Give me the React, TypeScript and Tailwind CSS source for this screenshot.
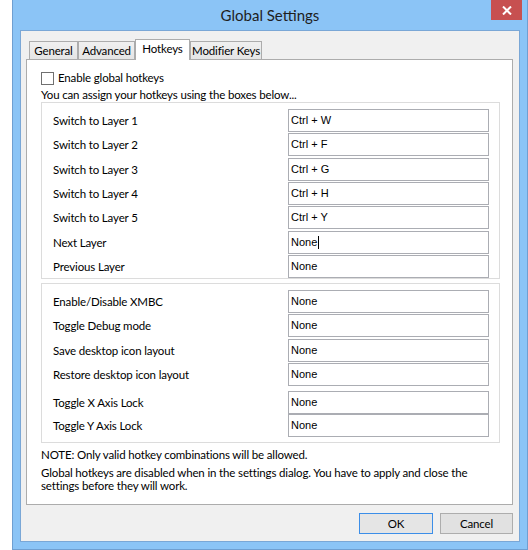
import React from 'react';

interface HotkeyRow {
    label: string;
    value: string;
    rowClass: string;
    caret?: boolean;
}

const layerRows: HotkeyRow[] = [
    { label: 'Switch to Layer 1', value: 'Ctrl + W', rowClass: 'h-[24px]' },
    { label: 'Switch to Layer 2', value: 'Ctrl + F', rowClass: 'h-[25px]' },
    { label: 'Switch to Layer 3', value: 'Ctrl + G', rowClass: 'h-[24px]' },
    { label: 'Switch to Layer 4', value: 'Ctrl + H', rowClass: 'h-[24px]' },
    { label: 'Switch to Layer 5', value: 'Ctrl + Y', rowClass: 'h-[25px]' },
    { label: 'Next Layer', value: 'None', rowClass: 'h-[24px]', caret: true },
    { label: 'Previous Layer', value: 'None', rowClass: 'h-[23px]' },
];

const toolRows: HotkeyRow[] = [
    { label: 'Enable/Disable XMBC', value: 'None', rowClass: 'h-[24px]' },
    { label: 'Toggle Debug mode', value: 'None', rowClass: 'h-[25px]' },
    { label: 'Save desktop icon layout', value: 'None', rowClass: 'h-[24px]' },
    { label: 'Restore desktop icon layout', value: 'None', rowClass: 'h-[28px]' },
    { label: 'Toggle X Axis Lock', value: 'None', rowClass: 'h-[23px]' },
    { label: 'Toggle Y Axis Lock', value: 'None', rowClass: 'h-[23px]' },
];

const tabs = [
    { name: 'General', width: 'ml-[3px] w-[49px]' },
    { name: 'Advanced', width: 'w-[57px]' },
    { name: 'Hotkeys', width: 'w-[55px]', active: true },
    { name: 'Modifier Keys', width: 'w-[72px]' },
];

const HotkeyGroup: React.FC<{ rows: HotkeyRow[]; bottomPad: string }> = ({ rows, bottomPad }) => (
    <div className={`w-[459px] border border-[#dcdcdc] pt-[6px] ${bottomPad}`}>
        {rows.map((row) => (
            <div key={row.label} className={`flex items-start ${row.rowClass}`}>
                <div className="h-[23px] w-[246px] pl-[11px] flex items-center whitespace-nowrap">{row.label}</div>
                <div className="h-[23px] w-[201px] shrink-0 border border-[#abadb3] bg-white pl-[2px] pt-[3px] font-['Liberation_Sans',sans-serif] text-[11px] tracking-normal leading-[14px] flex items-start">
                    <span>{row.value}</span>
                    {row.caret && <span className="ml-px mt-px h-[13px] w-px bg-black" />}
                </div>
            </div>
        ))}
    </div>
);

const App: React.FC = () => {
    return (
        <div className="w-[528px] h-[550px] bg-white flex font-['Lato',sans-serif] text-[11.5px] tracking-[-0.15px] text-black">
            <div className="ml-[12px] w-[516px] h-[550px] bg-[#8bc4f6] border-x border-b border-[#6f9fd1] px-[7px] pb-[7px] flex flex-col">
                {/* title bar */}
                <div className="h-[30px] grid grid-cols-[1fr_auto_1fr]">
                    <div />
                    <div className="text-[15px] tracking-normal leading-[30px] text-[#1e1e1e]">Global Settings</div>
                    <div className="flex justify-end">
                        <div className="w-[31px] h-[20px] mr-[-2px] bg-[#c75050] flex items-center justify-center">
                            <svg width="10" height="9" viewBox="0 0 10 9">
                                <path d="M1 0.5 L9 8.5 M9 0.5 L1 8.5" stroke="white" strokeWidth="2" />
                            </svg>
                        </div>
                    </div>
                </div>

                {/* client area */}
                <div className="h-[512px] bg-[#f0f0f0] border border-[#7aa7d6] flex flex-col">
                    <div className="mt-[8px] ml-[5px] h-[20px] flex items-end">
                        {tabs.map((tab) =>
                            tab.active ? (
                                <div
                                    key={tab.name}
                                    className={`${tab.width} h-[21px] -mb-px relative z-10 bg-white border border-b-0 border-[#acacac] text-center leading-[18px] whitespace-nowrap`}
                                >
                                    {tab.name}
                                </div>
                            ) : (
                                <div
                                    key={tab.name}
                                    className={`${tab.width} h-[18px] bg-gradient-to-b from-[#f0f0f0] to-[#e5e5e5] border border-b-0 border-[#acacac] text-center leading-[18px] whitespace-nowrap`}
                                >
                                    {tab.name}
                                </div>
                            )
                        )}
                    </div>

                    <div className="ml-[5px] w-[487px] h-[446px] bg-white border border-[#acacac] pl-[14px] pr-[12px] flex flex-col">
                        <div className="mt-[11px] h-[14px] flex items-center">
                            <div className="w-[13px] h-[13px] border border-[#707070] bg-white" />
                            <span className="ml-[4px]">Enable global hotkeys</span>
                        </div>
                        <div className="mt-[2px] h-[15px] leading-[15px] whitespace-nowrap">You can assign your hotkeys using the boxes below...</div>

                        <HotkeyGroup rows={layerRows} bottomPad="pb-0" />
                        <div className="mt-[4px]">
                            <HotkeyGroup rows={toolRows} bottomPad="pb-[5px]" />
                        </div>

                        <div className="mt-[4px] leading-[15px] whitespace-nowrap">NOTE: Only valid hotkey combinations will be allowed.</div>
                        <div className="mt-[4px] leading-[14px] whitespace-nowrap">
                            <div>Global hotkeys are disabled when in the settings dialog. You have to apply and close the</div>
                            <div className="-mt-px">settings before they will work.</div>
                        </div>
                    </div>

                    <div className="mt-[8px] mr-[6px] flex justify-end gap-[7px]">
                        <button className="w-[74px] h-[21px] bg-[#e5e5e5] border border-[#3c8ee8] leading-[19px]">OK</button>
                        <button className="w-[73px] h-[21px] bg-[#e1e1e1] border border-[#adadad] leading-[19px]">Cancel</button>
                    </div>
                </div>
            </div>
        </div>
    );
};

export default App;
